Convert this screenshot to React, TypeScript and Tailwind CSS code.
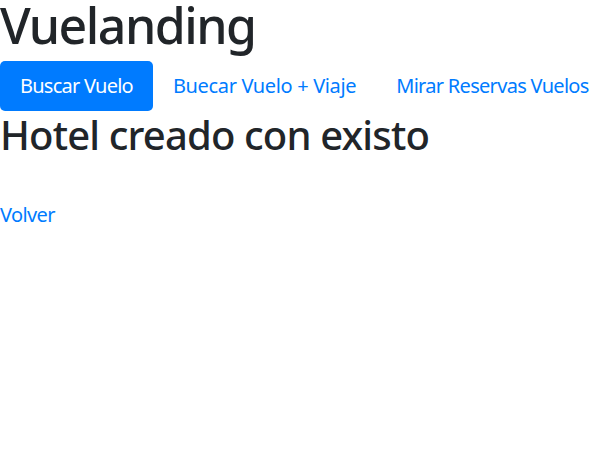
export default function App() {
  return (
    <div className="min-h-screen bg-white font-['Noto_Sans',sans-serif] text-[#212529]">
      <h1 className="text-[50px] leading-[50px] font-medium tracking-[-1.5px]">Vuelanding</h1>
      <nav className="mt-[11px] flex items-center whitespace-nowrap">
        <a href="#" className="shrink-0 rounded-[5px] bg-[#007bff] px-5 py-2.5 text-[20px] leading-[30px] tracking-[-0.75px] text-white">
          Buscar Vuelo
        </a>
        <a href="#" className="shrink-0 px-5 py-2.5 text-[20px] leading-[30px] tracking-[-0.35px] text-[#007bff]">
          Buecar Vuelo + Viaje
        </a>
        <a href="#" className="shrink-0 px-5 py-2.5 text-[20px] leading-[30px] tracking-[-0.7px] text-[#007bff]">
          Mirar Reservas Vuelos
        </a>
      </nav>
      <h2 className="text-[40px] leading-[48px] font-medium tracking-[-0.85px]">Hotel creado con existo</h2>
      <a href="#" className="mt-[41px] block text-[20px] leading-[30px] tracking-[-0.6px] text-[#007bff]">
        Volver
      </a>
    </div>
  );
}
